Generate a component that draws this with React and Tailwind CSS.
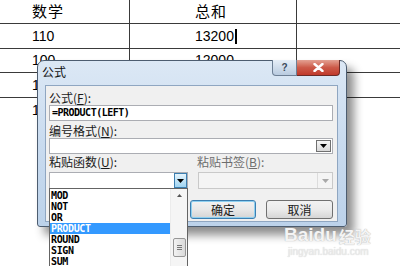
import React from "react";

const cjk = { fontFamily: '"Noto Sans CJK SC", "Noto Sans", sans-serif' };
const mono = { fontFamily: '"DejaVu Sans Mono", "Liberation Mono", monospace' };

function Arrow({ color = "#000" }) {
  return (
    <svg width="7" height="4" viewBox="0 0 7 4">
      <path d="M0 0 H7 L3.5 4 Z" fill={color} />
    </svg>
  );
}

function Row({ h, border = true, a, b }) {
  return (
    <div className={`flex ${border ? "border-b border-[#3a3a3a]" : ""}`} style={{ height: h }}>
      <div className="w-[130px] border-r border-[#3a3a3a] pl-[32px] flex items-center">{a}</div>
      <div className="w-[167px] border-r border-[#3a3a3a] pl-[65px] flex items-center">{b}</div>
    </div>
  );
}

export default function App() {
  const items = ["MOD", "NOT", "OR", "PRODUCT", "ROUND", "SIGN", "SUM"];
  return (
    <div className="relative w-[400px] h-[266px] bg-white overflow-hidden text-black">
      {/* background table */}
      <div className="flex flex-col" style={{ fontFamily: '"Liberation Sans", "Noto Sans CJK SC", sans-serif' }}>
        <Row h={24} a={<span style={cjk} className="text-[15px] tracking-[1px]">数学</span>} b={<span style={cjk} className="text-[15px] tracking-[1px]">总和</span>} />
        <Row
          h={25}
          a={<span className="text-[14px]">110</span>}
          b={
            <span className="text-[14px] flex items-center">
              13200<span className="ml-[1px] w-[2px] h-[15px] bg-black inline-block" />
            </span>
          }
        />
        <Row h={24} a={<span className="text-[14px]">100</span>} b={<span className="text-[14px]">12000</span>} />
        <Row h={25} a={<span className="text-[14px]">120</span>} b={<span className="text-[14px]">14400</span>} />
        <Row h={25} border={false} a={<span className="text-[14px]">1</span>} b={null} />
      </div>

      {/* dialog */}
      <div
        className="absolute left-[37px] top-[60px] w-[310px] h-[167px] rounded-t-[7px] rounded-b-[3px] border border-[#4d5d70] bg-gradient-to-b from-[#dce8f5] via-[#c9dbef] to-[#bcd2ea] shadow-[7px_8px_10px_rgba(0,0,0,0.45)] flex flex-col"
        style={cjk}
      >
        <div className="h-[24px] flex items-start">
          <span className="ml-[4px] mt-[4px] text-[12px] leading-[14px] text-[#111]">公式</span>
          <div className="ml-auto mr-[6px] flex -mt-px">
            <div
              className="w-[25px] h-[16px] rounded-bl-[4px] border border-[#6d7f95] border-t-0 bg-gradient-to-b from-[#e6eef7] to-[#b9cbe0] flex items-center justify-center text-[10px] font-bold text-[#3b4a5c] leading-none"
              style={{ fontFamily: '"Liberation Sans", sans-serif' }}
            >
              ?
            </div>
            <div className="w-[43px] h-[16px] rounded-br-[4px] border border-[#6b2a26] border-t-0 border-l-0 bg-gradient-to-b from-[#e3a193] via-[#cc5a49] to-[#c0392b] flex items-center justify-center">
              <svg width="11" height="9" viewBox="0 0 11 9">
                <path d="M1.5 1 L9.5 8 M9.5 1 L1.5 8" stroke="#fff" strokeWidth="2.4" strokeLinecap="round" />
              </svg>
            </div>
          </div>
        </div>

        <div className="mx-[7px] mr-[8px] mb-[4px] flex-1 border border-[#8fa6c1] bg-[#f0f0f0] pl-[3px] pr-[4px] pt-[5px] flex flex-col text-[12px] text-[#1a1a1a]">
          <div className="h-[14px] leading-[14px]">
            公式(<span className="underline">F</span>):
          </div>
          <div className="h-[16px] border border-[#abadb3] bg-white flex items-center pl-[2px]">
            <span className="font-bold text-[10px] leading-[12px] tracking-[-0.5px] text-black" style={mono}>
              =PRODUCT(LEFT)
            </span>
          </div>
          <div className="mt-[3px] h-[14px] leading-[14px]">
            编号格式(<span className="underline">N</span>):
          </div>
          <div className="h-[16px] border border-[#abadb3] bg-white flex justify-end p-px">
            <div className="w-[15px] border border-[#707070] bg-gradient-to-b from-[#f6f6f6] to-[#d8d8d8] flex items-center justify-center">
              <Arrow />
            </div>
          </div>
          <div className="mt-[1px] h-[14px] leading-[14px] flex">
            <span className="w-[148px]">
              粘贴函数(<span className="underline">U</span>):
            </span>
            <span className="text-[#6d6d6d]">
              粘贴书签(<span className="underline">B</span>):
            </span>
          </div>
          <div className="mt-[3px] h-[17px] flex gap-[10px]">
            <div className="w-[139px] border border-[#abadb3] bg-white flex justify-end">
              <div className="w-[13px] border border-[#3c7fb1] bg-gradient-to-b from-[#e5f4fc] to-[#9fd4f2] flex items-center justify-center">
                <Arrow />
              </div>
            </div>
            <div className="flex-1 border border-[#c9c9c9] bg-[#f4f4f4] flex justify-end">
              <div className="w-[15px] border-l border-[#dcdcdc] flex items-center justify-center">
                <Arrow color="#a8a8a8" />
              </div>
            </div>
          </div>
          <div className="mt-[11px] h-[19px] flex justify-end gap-[10px]">
            <div className="w-[66px] rounded-[3px] border border-[#3c7fb1] bg-gradient-to-b from-[#f2f2f2] via-[#e8e8e8] to-[#d4d4d4] shadow-[inset_0_0_0_1px_#8fd0f0] flex items-center justify-center">
              确定
            </div>
            <div className="w-[67px] rounded-[3px] border border-[#707070] bg-gradient-to-b from-[#f2f2f2] via-[#ebebeb] to-[#d6d6d6] flex items-center justify-center">
              取消
            </div>
          </div>
        </div>
      </div>

      {/* dropdown list */}
      <div className="absolute left-[49px] top-[188px] w-[139px] h-[90px] border border-[#646464] bg-white flex">
        <div className="flex-1 pt-[1px] flex flex-col">
          {items.map((t) => (
            <div
              key={t}
              className={`h-[11px] pl-[1px] flex items-center ${t === "PRODUCT" ? "bg-[#3399ff] text-white" : "text-black"}`}
            >
              <span className="font-bold text-[10px] leading-[11px] tracking-[-0.35px]" style={mono}>
                {t}
              </span>
            </div>
          ))}
        </div>
        <div className="w-[17px] bg-[#f5f5f5] border-l border-[#ececec] relative">
          <div className="flex justify-center mt-[5px]">
            <svg width="5" height="3" viewBox="0 0 5 3">
              <path d="M0 3 L2.5 0 L5 3 Z" fill="#555" />
            </svg>
          </div>
          <div className="absolute left-[2px] top-[49px] w-[13px] h-[19px] rounded-[2px] border border-[#979797] bg-gradient-to-r from-[#f2f2f2] to-[#dadada] flex flex-col items-center justify-center gap-[1px]">
            <div className="w-[5px] h-px bg-[#777]" />
            <div className="w-[5px] h-px bg-[#777]" />
            <div className="w-[5px] h-px bg-[#777]" />
          </div>
        </div>
      </div>

      {/* watermark */}
      <div className="absolute left-[284px] top-[225px] flex flex-col items-start pointer-events-none">
        <div className="flex items-end gap-[2px]">
          <span
            className="text-[19px] font-bold leading-none text-[#f4f4f4] [text-shadow:0_0_1px_#9a9a9a]"
            style={{ fontFamily: '"Liberation Sans", sans-serif' }}
          >
            Baidu
          </span>
          <span className="text-[16px] font-bold leading-none text-[#f4f4f4] [text-shadow:0_0_1px_#9a9a9a]" style={cjk}>
            经验
          </span>
        </div>
        <span
          className="mt-[3px] ml-[4px] text-[10px] leading-none text-[#ececec] [text-shadow:0_0_1px_#c8c8c8]"
          style={{ fontFamily: '"Liberation Sans", sans-serif' }}
        >
          jingyan.baidu.com
        </span>
      </div>
    </div>
  );
}
